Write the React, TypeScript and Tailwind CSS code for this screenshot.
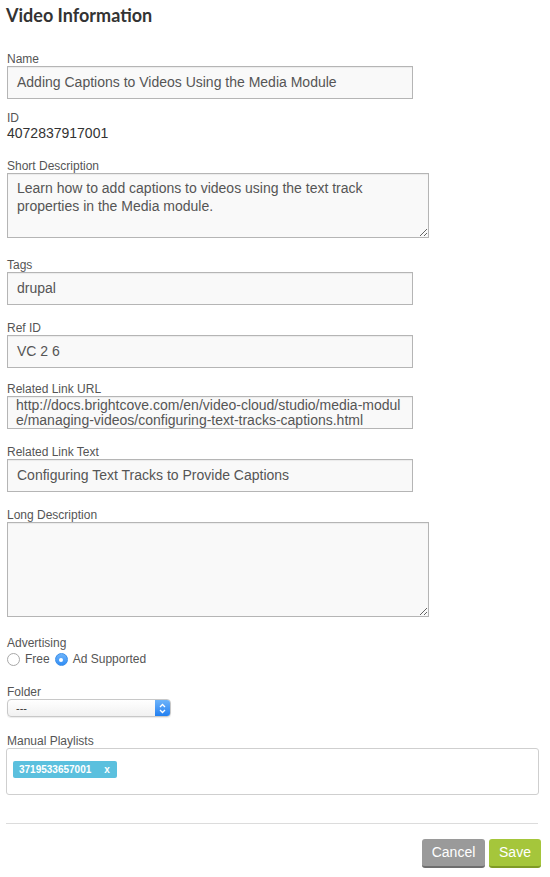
import React from 'react';

const labelCls = 'block text-[12px] leading-[14px] text-[#555]';
const inputCls =
  'block w-[406px] h-[33px] border border-[#b5b5b5] bg-[#f9f9f9] shadow-[inset_0_1px_1px_rgba(0,0,0,0.06)] px-[9px] text-[14px] text-[#555] leading-[31px]';

function TextField({ label, value, className }: { label: string; value: string; className?: string }) {
  return (
    <div className={className}>
      <label className={labelCls}>{label}</label>
      <div className={inputCls}>{value}</div>
    </div>
  );
}

function Area({ label, value, h, className }: { label: string; value: string; h: string; className?: string }) {
  return (
    <div className={className}>
      <label className={labelCls}>{label}</label>
      <textarea
        readOnly
        defaultValue={value}
        className={`block w-[422px] ${h} border border-[#b5b5b5] bg-[#f9f9f9] shadow-[inset_0_1px_1px_rgba(0,0,0,0.06)] px-[9px] pt-[5px] text-[14px] leading-[18px] text-[#555] outline-none`}
      />
    </div>
  );
}

function Radio({ checked, label }: { checked?: boolean; label: string }) {
  return (
    <span className="flex items-center gap-[5px]">
      {checked ? (
        <span className="w-[13px] h-[13px] rounded-full bg-gradient-to-b from-[#6cb3fa] to-[#2f8ef5] border border-[#3a8ee8] flex items-center justify-center">
          <span className="w-[4px] h-[4px] rounded-full bg-white" />
        </span>
      ) : (
        <span className="w-[13px] h-[13px] rounded-full bg-white border border-[#a8a8a8]" />
      )}
      <span>{label}</span>
    </span>
  );
}

export default function App() {
  return (
    <div className="w-[550px] min-h-[877px] bg-white px-[6px] font-['Liberation_Sans',Arial,sans-serif]">
      <h2 className="pt-[3px] text-[18px] leading-[24px] font-bold text-[#333] font-['Lato','Liberation_Sans',sans-serif]">
        Video Information
      </h2>

      <div className="pl-[1px]">
        <TextField className="mt-[25px]" label="Name" value="Adding Captions to Videos Using the Media Module" />

        <div className="mt-[12px]">
          <label className={labelCls}>ID</label>
          <div className="text-[14px] leading-[16px] text-[#333]">4072837917001</div>
        </div>

        <Area
          className="mt-[18px]"
          label="Short Description"
          h="h-[65px]"
          value="Learn how to add captions to videos using the text track properties in the Media module."
        />

        <TextField className="mt-[20px]" label="Tags" value="drupal" />
        <TextField className="mt-[16px]" label="Ref ID" value="VC 2 6" />

        <div className="mt-[14px]">
          <label className={labelCls}>Related Link URL</label>
          <div className="w-[406px] h-[33px] overflow-hidden border border-[#b5b5b5] bg-[#f9f9f9] shadow-[inset_0_1px_1px_rgba(0,0,0,0.06)] pl-[8px] pr-[2px] pt-[1px] text-[14px] leading-[15px] text-[#555] break-all">
            http://docs.brightcove.com/en/video-cloud/studio/media-module/managing-videos/configuring-text-tracks-captions.html
          </div>
        </div>

        <TextField className="mt-[16px]" label="Related Link Text" value="Configuring Text Tracks to Provide Captions" />

        <Area className="mt-[16px]" label="Long Description" h="h-[95px]" value="" />

        <div className="mt-[19px]">
          <label className={labelCls}>Advertising</label>
          <div className="mt-[2px] flex items-center gap-[5px] text-[12px] leading-[15px] text-[#555]">
            <Radio label="Free" />
            <Radio checked label="Ad Supported" />
          </div>
        </div>

        <div className="mt-[18px]">
          <label className={labelCls}>Folder</label>
          <div className="flex w-[164px] h-[18px] rounded-[4px] border border-[#c8c8c8] bg-gradient-to-b from-white to-[#f1f1f1] shadow-[0_1px_1px_rgba(0,0,0,0.08)] overflow-hidden">
            <span className="flex-1 pl-[8px] text-[11px] leading-[16px] text-[#333]">---</span>
            <span className="w-[15px] h-full bg-gradient-to-b from-[#6cb3fa] to-[#1f7ff0] flex items-center justify-center">
              <svg width="7" height="11" viewBox="0 0 7 11" fill="none" stroke="white" strokeWidth="1.3">
                <path d="M1 4 L3.5 1.5 L6 4" />
                <path d="M1 7 L3.5 9.5 L6 7" />
              </svg>
            </span>
          </div>
        </div>
      </div>

      <div className="mt-[17px]">
        <label className={`${labelCls} pl-[1px]`}>Manual Playlists</label>
        <div className="w-[533px] h-[47px] rounded-[3px] border border-[#cfcfcf] pt-[7px] pl-[6px]">
          <span className="inline-flex items-center h-[17px] rounded-[2px] bg-[#5bc0de] pl-[6px] pr-[7px] text-[10px] font-bold text-white">
            3719533657001<span className="ml-[13px]">x</span>
          </span>
        </div>
      </div>

      <hr className="mt-[28px] w-[532px] border-0 border-t border-[#dcdcdc]" />

      <div className="mt-[15px] flex justify-end gap-[4px] w-[535px]">
        <button className="w-[63px] h-[29px] rounded-[3px] bg-[#9a9a9a] border-b-[2px] border-[#6e6e6e] text-[14px] text-white">
          Cancel
        </button>
        <button className="w-[52px] h-[29px] rounded-[3px] bg-[#a5c63b] border-b-[2px] border-[#7f9b26] text-[14px] text-white">
          Save
        </button>
      </div>
    </div>
  );
}
